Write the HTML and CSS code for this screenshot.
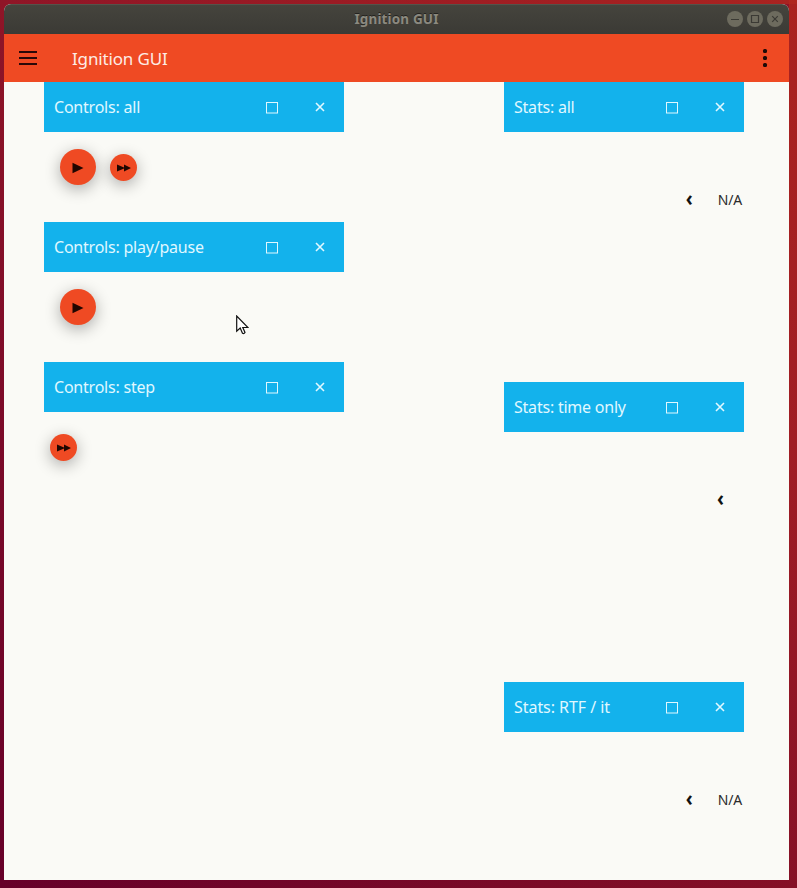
FILE: index.html
```html
<!DOCTYPE html>
<html lang="en">
<head>
<meta charset="utf-8">
<title>Ignition GUI</title>
<link rel="stylesheet" href="styles.css">
</head>
<body>
<svg class="defs" width="0" height="0" aria-hidden="true">
  <symbol id="max" viewBox="0 0 12 12"><rect x=".5" y=".5" width="11" height="10.5" fill="none" stroke="currentColor"/></symbol>
  <symbol id="close" viewBox="0 0 10 10"><path d="M1 1l8 8M9 1L1 9" fill="none" stroke="currentColor" stroke-width="1.6"/></symbol>
  <symbol id="play" viewBox="0 0 12 12"><path d="M.5 .8L11.5 6L.5 11.2z"/></symbol>
  <symbol id="step" viewBox="0 0 14 8"><path d="M0 .5L7 3.5V.5L14 4L7 7.5V4.5L0 7.5z"/></symbol>
</svg>
<div class="window">
  <header class="titlebar">
    <span class="caption">Ignition GUI</span>
    <div class="wm">
      <svg viewBox="0 0 16 16"><circle cx="8" cy="8" r="8"/><path d="M4 8.5h8"/></svg>
      <svg viewBox="0 0 16 16"><circle cx="8" cy="8" r="8"/><path d="M4.5 4.5h7v7h-7z"/></svg>
      <svg viewBox="0 0 16 16"><circle cx="8" cy="8" r="8"/><path d="M5.2 5.2l5.6 5.6M10.8 5.2l-5.6 5.6"/></svg>
    </div>
  </header>
  <nav class="toolbar">
    <div class="burger"><i></i><i></i><i></i></div>
    <span class="apptitle">Ignition GUI</span>
    <div class="dots"><i></i><i></i><i></i></div>
  </nav>
  <main class="content">
    <div class="left">
      <section class="panel">
        <div class="head"><span>Controls: all</span><svg class="max"><use href="#max"/></svg><svg class="close"><use href="#close"/></svg></div>
        <div class="controls">
          <div class="btn play"><svg><use href="#play"/></svg></div>
          <div class="btn step"><svg><use href="#step"/></svg></div>
        </div>
      </section>
      <section class="panel">
        <div class="head"><span>Controls: play/pause</span><svg class="max"><use href="#max"/></svg><svg class="close"><use href="#close"/></svg></div>
        <div class="controls">
          <div class="btn play"><svg><use href="#play"/></svg></div>
        </div>
      </section>
      <section class="panel">
        <div class="head"><span>Controls: step</span><svg class="max"><use href="#max"/></svg><svg class="close"><use href="#close"/></svg></div>
        <div class="controls only-step">
          <div class="btn step"><svg><use href="#step"/></svg></div>
        </div>
      </section>
    </div>
    <div class="right">
      <section class="panel">
        <div class="head"><span>Stats: all</span><svg class="max"><use href="#max"/></svg><svg class="close"><use href="#close"/></svg></div>
        <div class="stats"><b>‹</b><span>N/A</span></div>
      </section>
      <section class="panel">
        <div class="head"><span>Stats: time only</span><svg class="max"><use href="#max"/></svg><svg class="close"><use href="#close"/></svg></div>
        <div class="stats time"><b>‹</b></div>
      </section>
      <section class="panel">
        <div class="head"><span class="rtf">Stats: RTF / it</span><svg class="max"><use href="#max"/></svg><svg class="close"><use href="#close"/></svg></div>
        <div class="stats"><b>‹</b><span>N/A</span></div>
      </section>
    </div>
  </main>
</div>
<svg class="cursor" viewBox="0 0 13 20"><path d="M.7 1v15.2l3.5-3.1 2.3 5.2q1.5.8 2.5-.8l-2.2-5h5.2z" fill="#fff" stroke="#111" stroke-width="1.2"/></svg>
</body>
</html>
```
FILE: styles.css
```css
* { box-sizing: border-box; }
body {
  margin: 0;
  height: 888px;
  padding: 4px 8px 8px 4px;
  overflow: hidden;
  font-family: "Noto Sans", sans-serif;
  background:
    linear-gradient(to right, rgba(178, 40, 30, 0), rgba(178, 40, 30, .75)) top / 100% 4px no-repeat,
    linear-gradient(#aa231f, #a01d24 50%, #851026) right / 8px 100% no-repeat,
    linear-gradient(to right, #660029, #851026) bottom / 100% 8px no-repeat,
    linear-gradient(#8f1527, #7d0b29 45%, #660029);
}
.defs { position: absolute; }
.window {
  height: 876px;
  display: flex;
  flex-direction: column;
  border-radius: 7px 7px 0 0;
  overflow: hidden;
  background: #fafaf6;
}
.titlebar {
  flex: 0 0 30px;
  display: grid;
  grid-template-columns: 1fr auto 1fr;
  align-items: center;
  padding-bottom: 1px;
  background: linear-gradient(#45443d, #3b3a35);
  border-top: 1px solid #55534b;
}
.caption {
  grid-column: 2;
  color: #8b897f;
  font-size: 13.5px;
  letter-spacing: .15px;
  font-weight: 700;
  text-shadow: 0 -1px #24231f;
}
.wm { display: flex; gap: 4px; justify-content: flex-end; padding-right: 6px; }
.wm svg { width: 16px; height: 16px; fill: #6d6b5e; }
.wm path { fill: none; stroke: #3b3a34; stroke-width: 1.2; }
.toolbar {
  flex: 0 0 48px;
  display: flex;
  align-items: center;
  padding: 0 22px 0 15px;
  background: #ef4a23;
}
.burger { width: 18px; display: grid; gap: 4px; }
.burger i { height: 2px; background: #2a0808; }
.apptitle { margin-left: 35px; color: #fdece5; font-size: 17px; letter-spacing: -.15px; }
.dots { margin-left: auto; display: grid; gap: 3px; }
.dots i { width: 4px; height: 4px; border-radius: 1.5px; background: #1e0a08; }
.content {
  flex: 1;
  display: grid;
  grid-template-columns: 300px 240px;
  column-gap: 160px;
  padding-left: 40px;
}
.left .panel { height: 140px; }
.right .panel { height: 300px; }
.head {
  height: 50px;
  display: flex;
  align-items: center;
  padding: 0 19px 0 10px;
  background: #13b2ec;
  color: #e0f8ff;
  font-size: 16px;
  letter-spacing: -.22px;
}
.head span { flex: 1; white-space: nowrap; }
.head .rtf { letter-spacing: -.05px; }
.max { width: 12px; height: 12px; margin: 2px 37px 0 0; }
.close { width: 10px; height: 10px; }
.controls {
  height: 70px;
  display: flex;
  align-items: center;
  gap: 14px;
  padding-left: 16px;
}
.only-step { padding-left: 6px; }
.btn {
  display: grid;
  place-items: center;
  border-radius: 50%;
  background: #ef4a23;
  box-shadow: 0 4px 16px rgba(0, 0, 0, .32);
}
.play { width: 36px; height: 36px; }
.play svg { width: 12px; height: 12px; margin-top: 2px; }
.step { width: 27px; height: 27px; }
.step svg { width: 14px; height: 8px; margin-top: 2px; }
.btn svg { fill: #200600; }
.stats {
  height: 36px;
  margin-top: 49px;
  display: flex;
  align-items: center;
  justify-content: flex-end;
  padding-right: 2px;
  color: #2b2b2b;
  font-size: 14px;
}
.stats span { letter-spacing: -.2px; }
.stats b { color: #111; font-size: 19px; margin-right: 25px; line-height: 20px; transform: scaleY(1.1) translateY(-1px); }
.stats.time b { margin-right: 18px; }
.cursor { position: absolute; left: 236px; top: 315px; width: 13px; height: 20px; }
```
